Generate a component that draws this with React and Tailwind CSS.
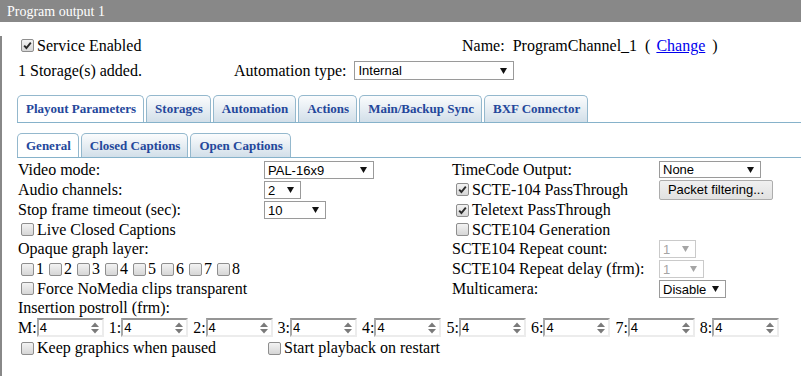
import clsx from 'clsx';

// small IE-style widgets drawn by hand so they match the screenshot
const Tri = ({ color = '#111' }) => (
  <svg width="7" height="6" viewBox="0 0 7 6" className="shrink-0">
    <path d="M0 0 L7 0 L3.5 6 Z" fill={color} />
  </svg>
);

const Check = ({ checked = false, className }) => (
  <span
    className={clsx(
      'inline-flex h-[13px] w-[13px] shrink-0 items-center justify-center rounded-[2px] border border-[#8e8e8e] bg-linear-to-b from-[#f3f3f3] to-[#d6d6d6]',
      className
    )}
  >
    {checked && (
      <svg width="11" height="11" viewBox="0 0 11 11">
        <path d="M2.2 5.6 L4.4 8 L8.8 2.6" fill="none" stroke="#2a2a2a" strokeWidth="1.9" />
      </svg>
    )}
  </span>
);

const Select = ({ value, w, h = 'h-[18px]', disabled }) => (
  <span
    className={clsx(
      "flex items-center justify-between border bg-white pl-[3px] pr-[6px] font-['Liberation_Sans',sans-serif] text-[13px] leading-none",
      w,
      h,
      disabled ? 'border-[#cacaca] text-[#a5a5a5]' : 'border-[#9a9a9a] text-black'
    )}
  >
    <span>{value}</span>
    <Tri color={disabled ? '#a5a5a5' : '#111'} />
  </span>
);

const Spin = () => (
  <span className="flex h-[19px] w-[67px] items-center justify-between border-2 border-t-[#959595] border-l-[#a9a9a9] border-b-[#ececec] border-r-[#ececec] bg-white pl-[1px] pr-[3px] font-['Liberation_Sans',sans-serif] text-[13px] leading-none">
    <span>4</span>
    <svg width="8" height="12" viewBox="0 0 8 12">
      <path d="M0 5 L8 5 L4 0.5 Z" fill="#7a7a7a" />
      <path d="M0 7 L8 7 L4 11.5 Z" fill="#7a7a7a" />
    </svg>
  </span>
);

const Tab = ({ label, active }) => (
  <div
    className={clsx(
      'flex h-full items-center rounded-t-[5px] border border-b-0 border-[#94b8cd] pl-[8px] pr-[7px] text-[13px] font-bold text-[#24479b]',
      active ? 'bg-white' : 'bg-linear-to-b from-[#fbfcfd] to-[#d2dfe9]'
    )}
  >
    {label}
  </div>
);

const Row = ({ h = 'h-[20px]', children }) => (
  <div className={clsx('flex items-center', h)}>{children}</div>
);

const mainTabs = ['Playout Parameters', 'Storages', 'Automation', 'Actions', 'Main/Backup Sync', 'BXF Connector'];
const subTabs = ['General', 'Closed Captions', 'Open Captions'];
const postroll = ['1', '2', '3', '4', '5', '6', '7', '8'];

export default function App() {
  return (
    <div className="min-h-[376px] w-full bg-white font-['Liberation_Serif',serif] text-[16px] text-black">
      <div className="flex h-[22px] items-center bg-[#888888] pl-[7px] text-[14px] text-white">
        Program output 1
      </div>

      <div className="min-h-[354px] border-l-2 border-[#888888]">
        {/* service / name */}
        <div className="mt-[14px] flex h-[19px] items-center pl-[16px]">
          <div className="flex w-[444px] items-center">
            <Check checked className="ml-[3px] mr-[3px]" />
            <span>Service Enabled</span>
          </div>
          <span>Name:</span>
          <span className="ml-[8px]">ProgramChannel_1</span>
          <span className="ml-[8px]">(</span>
          <a href="#" className="ml-[6px] text-[#0000ee] underline">Change</a>
          <span className="ml-[7px]">)</span>
        </div>

        <div className="mt-[6px] flex h-[19px] items-center pl-[16px]">
          <span className="w-[216px]">1 Storage(s) added.</span>
          <span>Automation type:</span>
          <span className="ml-[8px]">
            <Select value="Internal" w="w-[160px]" h="h-[19px]" />
          </span>
        </div>

        {/* main tabs */}
        <div className="ml-[15px] mt-[15px] flex h-[28px] items-end gap-[2px] border-b border-[#86b2ca]">
          {mainTabs.map((t, i) => (
            <Tab key={t} label={t} active={i === 0} />
          ))}
        </div>

        {/* sub tabs */}
        <div className="ml-[15px] mt-[10px] flex h-[25px] items-end gap-[2px] border-b border-[#86b2ca]">
          {subTabs.map((t, i) => (
            <Tab key={t} label={t} active={i === 0} />
          ))}
        </div>

        <div className="mt-[2px] pl-[16px]">
          <div className="flex">
            {/* left column */}
            <div className="w-[434px]">
              <Row>
                <span className="w-[246px]">Video mode:</span>
                <Select value="PAL-16x9" w="w-[110px]" />
              </Row>
              <Row>
                <span className="w-[246px]">Audio channels:</span>
                <Select value="2" w="w-[37px]" />
              </Row>
              <Row>
                <span className="w-[246px]">Stop frame timeout (sec):</span>
                <Select value="10" w="w-[62px]" />
              </Row>
              <Row h="h-[19px]">
                <Check className="ml-[3px] mr-[3px]" />
                <span>Live Closed Captions</span>
              </Row>
              <Row>Opaque graph layer:</Row>
              <Row>
                {postroll.map((n) => (
                  <span key={n} className="flex w-[28px] items-center">
                    <Check className="ml-[3px] mr-[2px]" />
                    <span>{n}</span>
                  </span>
                ))}
              </Row>
              <Row h="h-[19px]">
                <Check className="ml-[3px] mr-[3px]" />
                <span>Force NoMedia clips transparent</span>
              </Row>
            </div>

            {/* right column */}
            <div>
              <Row h="h-[19px]">
                <span className="w-[207px]">TimeCode Output:</span>
                <Select value="None" w="w-[102px]" h="h-[17px]" />
              </Row>
              <Row h="h-[21px]">
                <span className="flex w-[207px] items-center">
                  <Check checked className="ml-[4px] mr-[3px]" />
                  <span>SCTE-104 PassThrough</span>
                </span>
                <button className="h-[20px] w-[114px] rounded-[2px] border border-[#adadad] bg-linear-to-b from-[#f0f0f0] to-[#e1e1e1] font-['Liberation_Sans',sans-serif] text-[13px] leading-none">
                  Packet filtering...
                </button>
              </Row>
              <Row>
                <Check checked className="ml-[4px] mr-[3px]" />
                <span>Teletext PassThrough</span>
              </Row>
              <Row h="h-[19px]">
                <Check className="ml-[4px] mr-[3px]" />
                <span>SCTE104 Generation</span>
              </Row>
              <Row>
                <span className="w-[207px]">SCTE104 Repeat count:</span>
                <Select value="1" w="w-[37px]" disabled />
              </Row>
              <Row>
                <span className="w-[207px]">SCTE104 Repeat delay (frm):</span>
                <Select value="1" w="w-[45px]" disabled />
              </Row>
              <Row>
                <span className="w-[207px]">Multicamera:</span>
                <Select value="Disable" w="w-[67px]" />
              </Row>
            </div>
          </div>

          <Row h="h-[18px]">Insertion postroll (frm):</Row>
          <Row h="h-[21px]">
            <span>M:</span>
            <Spin />
            {postroll.map((n) => (
              <span key={n} className="ml-[5px] flex items-center">
                <span>{n}:</span>
                <Spin />
              </span>
            ))}
          </Row>
          <Row>
            <span className="flex w-[247px] items-center">
              <Check className="ml-[3px] mr-[3px]" />
              <span>Keep graphics when paused</span>
            </span>
            <Check className="ml-[3px] mr-[3px]" />
            <span>Start playback on restart</span>
          </Row>
        </div>
      </div>
    </div>
  );
}
